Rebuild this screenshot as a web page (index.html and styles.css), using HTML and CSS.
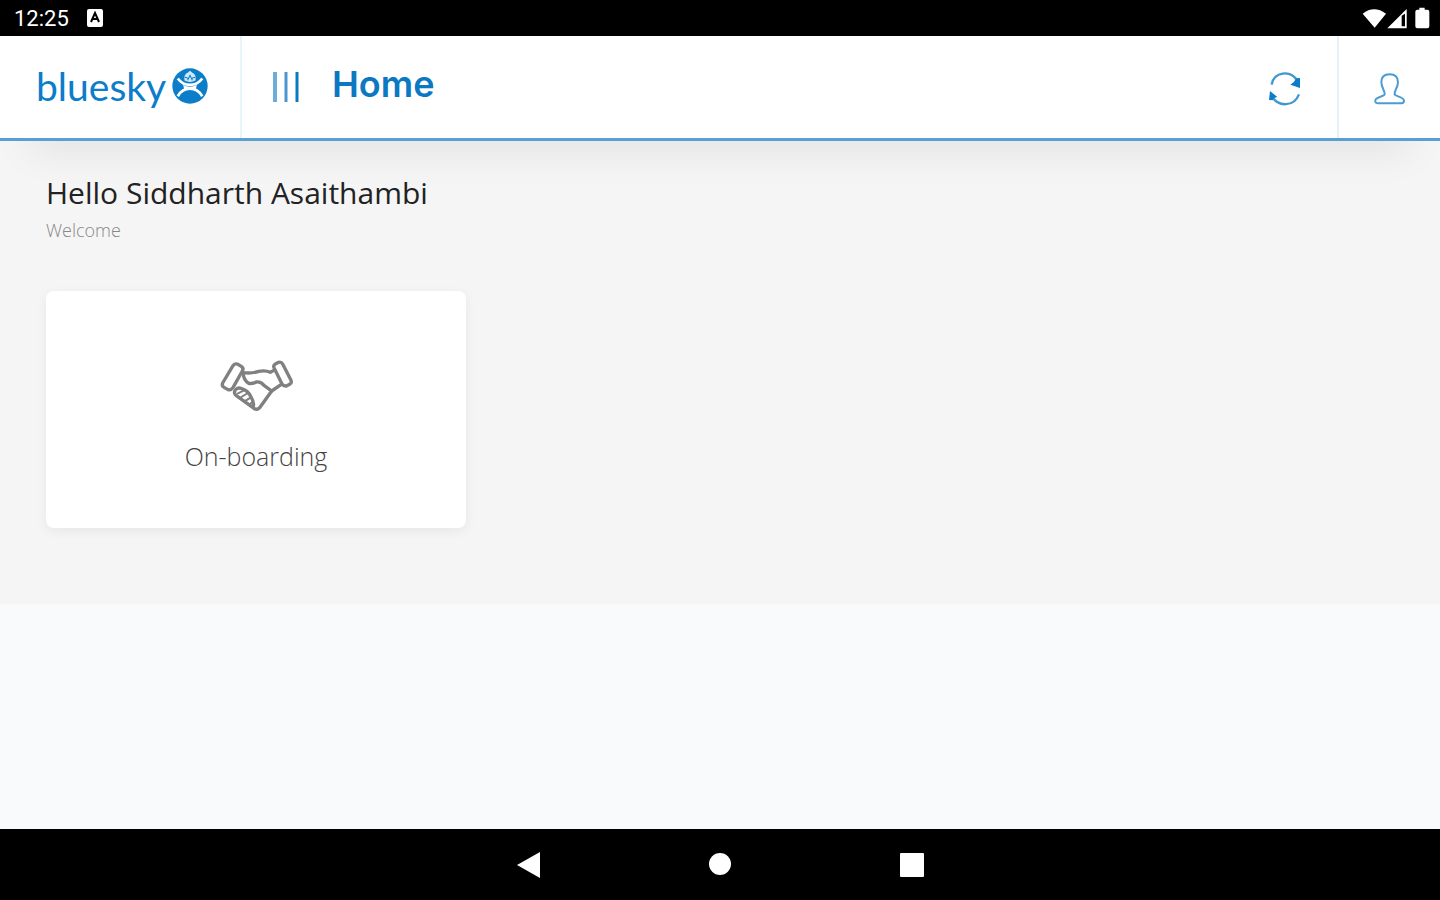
FILE: index.html
```html
<!DOCTYPE html>
<html lang="en">
<head>
  <meta charset="UTF-8">
  <meta name="viewport" content="width=device-width, initial-scale=1.0">
  <title>Home</title>
  <link rel="stylesheet" href="styles.css">
</head>
<body>
  <div class="status-bar">
    <span class="clock">12:25</span>
    <svg class="status-app" width="16" height="18" viewBox="0 0 16 18">
      <rect width="16" height="18" rx="2" fill="#fff"/>
      <path d="M4 13l4-9 4 9M6 10h4" fill="none" stroke="#000" stroke-width="2"/>
    </svg>
    <svg class="status-icons" width="68" height="22" viewBox="0 0 204 66">
      <path d="M2 20Q36-6 72 20L38 62z" fill="#fff"/>
      <path d="M76 64L134 6v58z" fill="#fff"/>
      <path d="M119 26v32h10V20z" fill="#000"/>
      <path d="M172 2h16v6h8q6 0 6 6v44q0 6-6 6h-30q-6 0-6-6V14q0-6 6-6h6z" fill="#fff"/>
    </svg>
  </div>

  <header class="header">
    <a class="brand" href="#">
      <span class="brand-name">bluesky</span>
      <svg class="brand-mark" width="36" height="36" viewBox="510 204 106 106">
        <circle cx="563" cy="257" r="52" fill="#0b7dc9"/>
        <path d="M527 235Q541 254 563 254Q585 254 599 235M527 287Q540 265 563 265Q586 265 599 287" fill="none" stroke="#fff" stroke-width="8"/>
        <path d="M543 254Q563 264 583 254L580 268Q563 258 546 268z" fill="#fff"/>
        <path d="M547 241Q544 222 556 218L563 212L570 218Q582 222 579 241Q563 249 547 241z" fill="#cfe8f7"/>
        <path d="M556 240l7-14 7 14M548 231l9 3M578 231l-9 3" fill="none" stroke="#0b7dc9" stroke-width="3"/>
      </svg>
    </a>
    <div class="page-head">
      <button class="icon-button" aria-label="Menu">
        <svg width="28" height="30" viewBox="0 0 28 30">
          <path d="M3 0v30" stroke="#6fadd9" stroke-width="4"/>
          <path d="M14 0v30" stroke="#4a97d0" stroke-width="3"/>
          <path d="M25 0v30" stroke="#0b78c2" stroke-width="3"/>
        </svg>
      </button>
      <h1 class="page-title">Home</h1>
    </div>
    <button class="icon-button refresh" aria-label="Refresh">
      <svg width="34" height="34" viewBox="86 216 102 102">
        <path d="M97 254C103 215 153 208 174 242M179 283C164 321 117 322 98 289" fill="none" stroke="#3e97d1" stroke-width="7"/>
        <path d="M182 234v30l-29-10q12-6 18-19zM89 300l3-27 22 18q-12 2-14 10z" fill="#0b7dc9"/>
      </svg>
    </button>
    <button class="icon-button account" aria-label="Account">
      <svg width="33" height="34" viewBox="402 216 99 102">
        <path d="M437 284C439 272 427 265 427 246C427 230 438 223 452 223C467 223 477 231 477 247C477 265 464 272 467 284C474 291 494 290 495 302C495 309 491 310 485 310H418C411 310 408 307 409 301C411 291 430 291 437 284z" fill="none" stroke="#4a9dd4" stroke-width="6" stroke-linejoin="round"/>
      </svg>
    </button>
  </header>

  <main class="content">
    <h2 class="greeting">Hello Siddharth Asaithambi</h2>
    <p class="welcome">Welcome</p>
    <div class="cards">
      <a class="card" href="#">
        <svg width="75" height="52" viewBox="145 60 225 156" fill="none" stroke="#808080" stroke-width="10" stroke-linejoin="round" stroke-linecap="round">
          <path d="M187 77Q193 69 202 73L213 80Q220 85 215 93L187 143Q181 152 172 149L160 142Q152 138 156 129z"/>
          <path d="M310 83Q307 76 314 72L324 67Q332 65 336 72L361 121Q364 129 357 133L347 138Q339 139 334 132z"/>
          <path d="M218 98Q244 101 264 94Q285 90 299 97L309 91"/>
          <path d="M218 100Q218 120 234 130Q245 132 257 126Q270 124 280 136L303 153L331 134"/>
          <path d="M303 153L267 203Q259 212 250 205L196 166Q187 158 195 149Q202 142 211 145Q232 151 240 169Q251 186 248 199"/>
          <path d="M202 160l18-9M212 171l20-12M225 182l16-10M237 193l8-7" stroke-width="6"/>
        </svg>
        <span class="card-label">On-boarding</span>
      </a>
    </div>
  </main>

  <nav class="system-nav">
    <button class="icon-button" aria-label="Back">
      <svg width="24" height="26" viewBox="0 0 24 26"><path d="M1 13L24 0v26z" fill="#fff"/></svg>
    </button>
    <button class="icon-button" aria-label="Home screen">
      <svg width="24" height="24" viewBox="0 0 24 24"><circle cx="12" cy="11" r="11" fill="#fff"/></svg>
    </button>
    <button class="icon-button" aria-label="Recent apps">
      <svg width="24" height="24" viewBox="0 0 24 24"><rect width="24" height="24" rx="1" fill="#fff"/></svg>
    </button>
  </nav>
</body>
</html>
```
FILE: styles.css
```css
* {
  box-sizing: border-box;
}

body {
  margin: 0;
  min-height: 100vh;
  display: flex;
  flex-direction: column;
  background: #f9fafc;
  font-family: "Open Sans", "Noto Sans", sans-serif;
}

svg {
  display: block;
}

.status-bar {
  display: flex;
  align-items: center;
  height: 36px;
  padding: 0 10px 0 14px;
  background: #000;
  color: #fff;
}

.clock {
  font-family: Roboto, sans-serif;
  font-size: 22px;
  font-weight: 400;
}

.status-app {
  margin-left: 18px;
}

.status-icons {
  margin-left: auto;
}

.header {
  position: relative;
  display: flex;
  height: 105px;
  background: #fff;
  border-bottom: 3px solid #5a9fd4;
  box-shadow: 0 40px 40px -30px rgba(0, 0, 0, 0.08);
}

.brand {
  display: flex;
  align-items: center;
  gap: 6px;
  width: 242px;
  padding: 0 0 2px 36px;
  border-right: 2px solid #e6f6f8;
  color: #0b7dc9;
  text-decoration: none;
}

.brand-name {
  font-family: Lato, sans-serif;
  font-size: 39px;
  line-height: 44px;
}

.page-head {
  display: flex;
  flex: 1;
  align-items: center;
  gap: 32px;
  padding-left: 30px;
}

.page-title {
  margin: 0;
  padding-bottom: 6px;
  color: #0b78c2;
  font-family: Inter, sans-serif;
  font-size: 36px;
  font-weight: 600;
  line-height: 44px;
}

.icon-button {
  display: flex;
  align-items: center;
  justify-content: center;
  padding: 0;
  border: none;
  background: none;
  cursor: pointer;
}

.refresh {
  width: 104px;
  padding-top: 4px;
}

.account {
  width: 103px;
  padding-top: 4px;
  border-left: 2px solid #e3f1fa;
}

.content {
  padding: 32px 46px 76px;
  background: #f5f5f5;
}

.greeting {
  margin: 0;
  color: #222;
  font-size: 30px;
  font-weight: 400;
  line-height: 40px;
}

.welcome {
  margin: 4px 0 48px;
  color: #888;
  font-size: 18px;
  font-weight: 300;
  line-height: 26px;
}

.cards {
  display: grid;
  grid-template-columns: repeat(3, 1fr);
  gap: 44px;
}

.card {
  display: flex;
  flex-direction: column;
  align-items: center;
  gap: 28px;
  padding: 69px 20px 55px;
  border-radius: 8px;
  background: #fff;
  box-shadow: 0 3px 12px rgba(0, 0, 0, 0.06);
  color: #444;
  text-decoration: none;
}

.card-label {
  font-size: 25px;
  font-weight: 300;
  line-height: 33px;
}

.system-nav {
  display: flex;
  justify-content: center;
  gap: 168px;
  height: 71px;
  margin-top: auto;
  background: #000;
}
```
